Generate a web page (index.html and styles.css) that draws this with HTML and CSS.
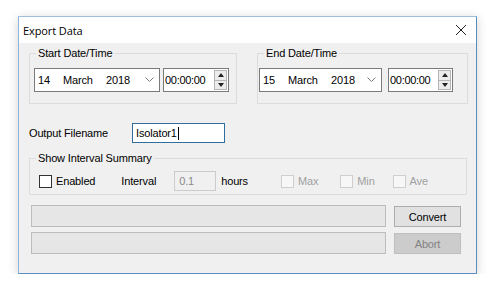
FILE: index.html
```html
<!DOCTYPE html>
<html>
<head>
<meta charset="utf-8">
<link rel="stylesheet" href="styles.css">
</head>
<body>
<div class="page">
  <div class="window">
    <div class="titlebar">
      <span class="title">Export Data</span>
      <span class="close">
        <svg width="12" height="12" viewBox="0 0 12 12"><path d="M1 1 L11 11 M11 1 L1 11" stroke="#222" stroke-width="1" fill="none"/></svg>
      </span>
    </div>
    <div class="client">
      <div class="dates">
        <fieldset class="group group-start">
          <legend>Start Date/Time</legend>
          <div class="dt-row">
            <div class="datepick w126">
              <span class="d">14</span><span class="m">March</span><span class="y">2018</span>
              <span class="chev"><svg width="9" height="6" viewBox="0 0 9 6"><path d="M0.5 0.5 L4.5 4.5 L8.5 0.5" stroke="#7a7a7a" fill="none"/></svg></span>
            </div>
            <div class="timepick gap3">
              <span class="t">00:00:00</span>
              <span class="spin"><span class="up"></span><span class="down"></span></span>
            </div>
          </div>
        </fieldset>
        <fieldset class="group group-end">
          <legend>End Date/Time</legend>
          <div class="dt-row">
            <div class="datepick w123">
              <span class="d">15</span><span class="m">March</span><span class="y">2018</span>
              <span class="chev"><svg width="9" height="6" viewBox="0 0 9 6"><path d="M0.5 0.5 L4.5 4.5 L8.5 0.5" stroke="#7a7a7a" fill="none"/></svg></span>
            </div>
            <div class="timepick gap6">
              <span class="t">00:00:00</span>
              <span class="spin"><span class="up"></span><span class="down"></span></span>
            </div>
          </div>
        </fieldset>
      </div>

      <div class="file-row">
        <span class="lbl">Output Filename</span>
        <div class="textbox">Isolator1<span class="caret"></span></div>
      </div>

      <fieldset class="group group-interval">
        <legend>Show Interval Summary</legend>
        <div class="int-row">
          <span class="chk"><span class="box"></span><span>Enabled</span></span>
          <span class="interval-lbl">Interval</span>
          <span class="numbox">0.1</span>
          <span class="hours">hours</span>
          <span class="chk dis c-max"><span class="box"></span><span>Max</span></span>
          <span class="chk dis c-min"><span class="box"></span><span>Min</span></span>
          <span class="chk dis c-ave"><span class="box"></span><span>Ave</span></span>
        </div>
      </fieldset>

      <div class="progress-area">
        <div class="bars">
          <div class="bar"></div>
          <div class="bar"></div>
        </div>
        <div class="buttons">
          <div class="btn">Convert</div>
          <div class="btn disabled">Abort</div>
        </div>
      </div>
    </div>
  </div>
</div>
</body>
</html>
```

FILE: styles.css
```css
* { box-sizing: border-box; }
html, body { margin: 0; padding: 0; background: #ffffff; }
body {
  font-family: "Liberation Sans", Arial, sans-serif;
  font-size: 11px;
  letter-spacing: -0.15px;
  color: #000;
}
.page {
  padding: 16px 0 0 18px;
}
.window {
  width: 459px;
  height: 258px;
  border: 1px solid #5a8fbd;
  border-top-color: #9cc0de;
  border-left-color: #8db6da;
  box-shadow: 0 2px 10px rgba(0,0,0,0.18);
  background: #f0f0f0;
  display: flex;
  flex-direction: column;
}
.titlebar {
  height: 26px;
  background: #ffffff;
  display: flex;
  align-items: center;
  justify-content: space-between;
  padding: 0 9px 0 4px;
  flex: none;
}
.title {
  font-family: "Open Sans", "Noto Sans", sans-serif;
  font-size: 11px;
  color: #000;
  letter-spacing: -0.1px;
}
.close { display: flex; align-items: center; }
.client {
  flex: 1;
  padding: 4px 0 0 10px;
  display: flex;
  flex-direction: column;
}
.dates {
  display: flex;
  gap: 20px;
}
fieldset.group {
  margin: 0;
  border: 1px solid #dcdcdc;
  border-radius: 0;
  padding: 0;
  min-width: 0;
}
fieldset.group legend {
  margin-left: 6px;
  padding: 0 2px;
  color: #000;
  line-height: 13px;
}
.group-start { width: 208px; height: 57px; }
.group-end { width: 211px; height: 57px; }
.dt-row {
  display: flex;
  padding: 8px 0 0 4px;
}
.group-end .dt-row { padding-left: 1px; }
.datepick {
  height: 24px;
  background: #fff;
  border: 1px solid #7a7a7a;
  display: flex;
  align-items: center;
  padding-left: 3px;
}
.w126 { width: 126px; }
.w123 { width: 123px; }
.datepick .d { width: 25px; }
.datepick .m { width: 43px; }
.datepick .y { width: 36px; }
.chev { margin-left: auto; margin-right: 5px; display: flex; }
.timepick {
  height: 24px;
  width: 66px;
  background: #fff;
  border: 1px solid #7a7a7a;
  display: flex;
  align-items: center;
  padding-left: 1px;
}
.gap3 { margin-left: 3px; }
.gap6 { margin-left: 6px; width: 65px; }
.timepick .t { letter-spacing: -0.3px; }
.spin {
  margin-left: auto;
  margin-right: 1px;
  width: 13px;
  height: 20px;
  display: flex;
  flex-direction: column;
  border: 1px solid #b5b5b5;
  background: #ececec;
}
.spin .up, .spin .down {
  flex: 1;
  display: flex;
  align-items: center;
  justify-content: center;
}
.spin .up { border-bottom: 1px solid #b5b5b5; }
.spin .up::before {
  content: "";
  border-left: 3px solid transparent;
  border-right: 3px solid transparent;
  border-bottom: 4px solid #222;
}
.spin .down::before {
  content: "";
  border-left: 3px solid transparent;
  border-right: 3px solid transparent;
  border-top: 4px solid #222;
}
.file-row {
  display: flex;
  align-items: center;
  margin-top: 19px;
  height: 20px;
}
.file-row .lbl { width: 103px; }
.textbox {
  width: 93px;
  height: 20px;
  border: 1px solid #2e6f9e;
  background: #fff;
  padding-left: 3px;
  display: flex;
  align-items: center;
}
.caret {
  display: inline-block;
  width: 1px;
  height: 13px;
  background: #000;
  margin-left: 1px;
}
.group-interval {
  margin-top: 9px !important;
  width: 438px;
  height: 43px;
}
.int-row {
  display: flex;
  align-items: center;
  padding: 6px 0 0 9px;
  height: 26px;
}
.chk { display: flex; align-items: center; gap: 4px; }
.box {
  width: 13px;
  height: 13px;
  border: 1px solid #333;
  background: #fff;
}
.chk.dis { color: #a0a0a0; }
.chk.dis .box { border-color: #cfcfcf; background: #f7f7f7; }
.interval-lbl { margin-left: 26px; }
.numbox {
  margin-left: 18px;
  width: 42px;
  height: 20px;
  border: 1px solid #cccccc;
  background: #f0f0f0;
  color: #8a8a8a;
  display: flex;
  align-items: center;
  padding-left: 4px;
}
.hours { margin-left: 5px; }
.c-max { margin-left: 33px; }
.c-min { margin-left: 22px; }
.c-ave { margin-left: 18px; }
.progress-area {
  display: flex;
  margin-top: 10px;
  padding-left: 2px;
}
.bars {
  display: flex;
  flex-direction: column;
  gap: 5px;
}
.bar {
  width: 355px;
  height: 22px;
  background: #e6e6e6;
  border: 1px solid #bcbcbc;
}
.buttons {
  display: flex;
  flex-direction: column;
  gap: 6px;
  margin-left: 8px;
  padding-top: 1px;
}
.btn {
  width: 67px;
  height: 21px;
  border: 1px solid #adadad;
  background: #e1e1e1;
  display: flex;
  align-items: center;
  justify-content: center;
}
.btn.disabled {
  background: #cccccc;
  border-color: #bfbfbf;
  color: #838383;
}
```
